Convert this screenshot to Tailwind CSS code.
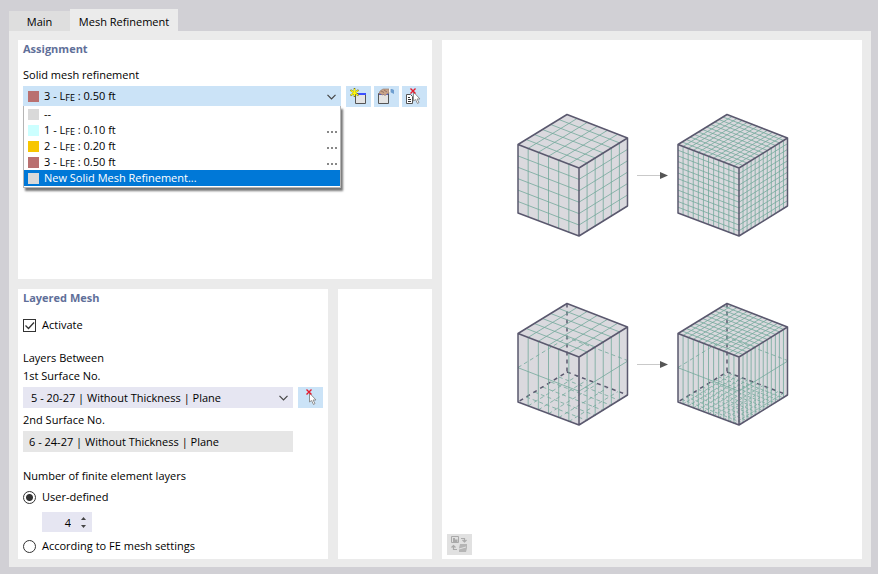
<!DOCTYPE html>
<html lang="en">
<head>
<meta charset="utf-8">
<meta name="viewport" content="width=device-width, initial-scale=1">
<title>Mesh Refinement</title>
<script src="https://cdn.jsdelivr.net/npm/@tailwindcss/browser@4"></script>
</head>
<body class="flex min-h-screen flex-col bg-[#d1d0d5] pt-[9px] pr-[7px] pb-[7px] pl-[9px] font-['Open_Sans','Noto_Sans',sans-serif] text-[11px] leading-4 text-black">
<nav class="flex items-end" role="tablist" aria-label="Dialog pages">
  <button type="button" role="tab" aria-selected="false" class="h-5 w-[61px] bg-[#dedede] pt-[2px]">Main</button>
  <button type="button" role="tab" aria-selected="true" class="h-[22px] w-[108px] bg-[#ebebeb] pt-1">Mesh Refinement</button>
</nav>
<main class="grid flex-1 grid-cols-[414fr_420fr] gap-[10px] bg-[#ebebeb] px-[9px] pt-[9px] pb-2">
  <div class="flex flex-col gap-[10px]">
    <section class="flex-1 bg-white px-[5px]">
      <h2 class="text-[11px] leading-[18px] font-bold text-[#5f6f99]">Assignment</h2>
      <label for="refinement" class="mt-[9px] block">Solid mesh refinement</label>
      <div class="mt-[3px] flex items-start gap-[3px]">
        <div class="relative mr-[2px] flex-1">
          <select id="refinement" class="block h-5 w-full appearance-none bg-[#cbe3f7] text-transparent outline-none">
            <option>3 - LFE : 0.50 ft</option>
          </select>
          <div class="pointer-events-none absolute inset-0 flex items-center gap-[5px] pt-px pr-[5px] pl-[5px]" aria-hidden="true">
            <span class="size-[11px] bg-[#b97070]"></span>
            <span class="flex-1">3 - L<span class="relative top-px text-[9px]">FE</span> : 0.50 ft</span>
            <svg width="9" height="6" viewBox="0 0 9 6" fill="none" stroke="#444" stroke-width="1.2"><path d="M.5.8l4 4 4-4"/></svg>
          </div>
          <ul role="listbox" aria-label="Mesh refinements" class="absolute top-5 right-0 left-0 border-r border-b border-l border-[#b5b5b5] bg-white pb-px shadow-[2px_3px_2px_#777]">
            <li role="option" class="flex h-4 items-center gap-[5px] pl-1"><span class="size-[11px] bg-[#d9d9d9]"></span>--</li>
            <li role="option" class="flex h-4 items-center gap-[5px] pl-1"><span class="size-[11px] bg-[#ccffff]"></span><span>1 - L<span class="relative top-px text-[9px]">FE</span> : 0.10 ft</span><button type="button" aria-label="Edit 1" class="mt-1 mr-[3px] ml-auto flex gap-[2px]"><i class="size-[2px] bg-[#888]"></i><i class="size-[2px] bg-[#888]"></i><i class="size-[2px] bg-[#888]"></i></button></li>
            <li role="option" class="flex h-4 items-center gap-[5px] pl-1"><span class="size-[11px] bg-[#f7c600]"></span><span>2 - L<span class="relative top-px text-[9px]">FE</span> : 0.20 ft</span><button type="button" aria-label="Edit 2" class="mt-1 mr-[3px] ml-auto flex gap-[2px]"><i class="size-[2px] bg-[#888]"></i><i class="size-[2px] bg-[#888]"></i><i class="size-[2px] bg-[#888]"></i></button></li>
            <li role="option" class="flex h-4 items-center gap-[5px] pl-1"><span class="size-[11px] bg-[#b97070]"></span><span>3 - L<span class="relative top-px text-[9px]">FE</span> : 0.50 ft</span><button type="button" aria-label="Edit 3" class="mt-1 mr-[3px] ml-auto flex gap-[2px]"><i class="size-[2px] bg-[#888]"></i><i class="size-[2px] bg-[#888]"></i><i class="size-[2px] bg-[#888]"></i></button></li>
            <li role="option" aria-selected="true" class="flex h-4 items-center gap-[5px] bg-[#0078d7] pl-1 text-white"><span class="size-[11px] bg-[#d9d9d9]"></span>New Solid Mesh Refinement...</li>
          </ul>
        </div>
        <button type="button" aria-label="New refinement" class="h-[21px] w-[25px] bg-[#cbe3f7]">
          <svg width="25" height="21" viewBox="0 0 25 21">
            <path d="M9.500 7.500h10v10h-10z" fill="#e4e4e4" stroke="#555"/>
            <path d="M12 7h8v2h-8z" fill="#3c50ff"/>
            <path d="M8.500 2v9M4.500 4l8 5.500M12.500 4l-8 5.500" stroke="#7c7c18" stroke-width="1.600"/>
            <path d="M8.500 3v7M5 4.500l7 4.500M12 4.500l-7 4.500" stroke="#fff80a" stroke-width="1.200"/>
          </svg>
        </button>
        <button type="button" aria-label="Edit refinement" class="h-[21px] w-[25px] bg-[#cbe3f7]">
          <svg width="25" height="21" viewBox="0 0 25 21">
            <path d="M4.500 7.500h10v10h-10z" fill="#e4e4e4" stroke="#555"/>
            <path d="M5 7h9v2H5z" fill="#4356e8"/>
            <path d="M5 8l1-3 3-2h6v4l-2 1-2 1.500-1.500-1L8 9l-1-1z" fill="#c9a48b" stroke="#907565" stroke-width=".6"/>
            <path d="M7 5l3 1.500M10 4l3 2" stroke="#806253" stroke-width=".7"/>
            <path d="M16 3h2l2 1v4l-2-1-2-1z" fill="#6d9ed0"/><path d="M15 2.500h1.500v4H15z" fill="#f5f5f5"/>
          </svg>
        </button>
        <button type="button" aria-label="Select refinement in view" class="h-[21px] w-[25px] bg-[#cbe3f7]">
          <svg width="25" height="21" viewBox="0 0 25 21">
            <path d="M4.500 8.500h4l2 2v7h-6z" fill="#fff" stroke="#555"/>
            <path d="M6 11.500h2M6 13.500h3M6 15.500h3" stroke="#333"/>
            <path d="M11.500 6v9l2-1.500 2 4 1.500-1-2-3.500h3z" fill="#fff" stroke="#858585" stroke-width=".9"/>
            <path d="M8.500 2.500l5 5M13.500 2.500l-5 5" stroke="#e31b2d" stroke-width="1.400"/>
          </svg>
        </button>
      </div>
    </section>
    <div class="grid grid-cols-[310fr_94fr] gap-[10px]">
      <section class="bg-white px-[5px] pb-[5px]">
        <h2 class="text-[11px] leading-[18px] font-bold text-[#5f6f99]">Layered Mesh</h2>
        <label class="mt-[10px] flex items-center gap-[6px]">
          <span class="relative size-[13px]">
            <input type="checkbox" checked class="block size-[13px] appearance-none border border-[#333] bg-white">
            <svg class="pointer-events-none absolute inset-0" width="13" height="13" viewBox="0 0 13 13" fill="none" stroke="#333" stroke-width="1.300"><path d="M2.500 6.500l3 3 5.500-6"/></svg>
          </span>Activate
        </label>
        <p class="mt-[17px]">Layers Between</p>
        <label for="surface1" class="mt-[2px] block">1st Surface No.</label>
        <div class="mt-[3px] flex items-center gap-[5px]">
          <div class="relative flex-1">
            <select id="surface1" class="block h-[21px] w-full appearance-none bg-[#e6e6f2] pl-2 outline-none">
              <option>5 - 20-27 | Without Thickness | Plane</option>
            </select>
            <svg class="pointer-events-none absolute top-2 right-[5px]" width="9" height="6" viewBox="0 0 9 6" fill="none" stroke="#444" stroke-width="1.200"><path d="M.5.8l4 4 4-4"/></svg>
          </div>
          <button type="button" aria-label="Pick surface in view" class="h-[21px] w-[25px] bg-[#cbe3f7]">
            <svg width="25" height="21" viewBox="0 0 25 21">
              <path d="M11.500 6v9l2-1.500 2 4 1.500-1-2-3.500h3z" fill="#fff" stroke="#858585" stroke-width=".9"/>
              <path d="M8.500 2.500l5 5M13.500 2.500l-5 5" stroke="#e31b2d" stroke-width="1.400"/>
            </svg>
          </button>
        </div>
        <label for="surface2" class="mt-1 block">2nd Surface No.</label>
        <div class="mt-[3px] flex pr-[30px]">
          <input id="surface2" readonly value="6 - 24-27 | Without Thickness | Plane" class="h-[21px] w-full bg-[#e6e6e6] px-[6px] outline-none">
        </div>
        <fieldset>
          <legend class="pt-4">Number of finite element layers</legend>
          <label class="mt-[5px] flex items-center gap-[6px]">
            <input type="radio" name="layers" checked class="size-[13px] appearance-none rounded-full border border-[#333] bg-white bg-[radial-gradient(circle,#333_3px,transparent_4px)]">User-defined
          </label>
          <div class="mt-[7px] ml-[19px] flex h-5 w-[50px] items-center bg-[#e6e6f2]">
            <input type="text" inputmode="numeric" role="spinbutton" aria-label="Layer count" value="4" class="h-5 w-[29px] text-right outline-none">
            <span class="ml-[10px] flex flex-col gap-[5px]">
              <button type="button" aria-label="Increase" class="block h-[3px] w-[5px]"><svg class="block" width="5" height="3" viewBox="0 0 5 3"><path d="M0 3l2.500-3L5 3z" fill="#444"/></svg></button>
              <button type="button" aria-label="Decrease" class="block h-[3px] w-[5px]"><svg class="block" width="5" height="3" viewBox="0 0 5 3"><path d="M0 0l2.500 3L5 0z" fill="#444"/></svg></button>
            </span>
          </div>
          <label class="mt-[6px] flex items-center gap-[6px]">
            <input type="radio" name="layers" class="size-[13px] appearance-none rounded-full border border-[#333] bg-white">According to FE mesh settings
          </label>
        </fieldset>
      </section>
      <section class="bg-white" aria-label="Empty panel"></section>
    </div>
  </div>
  <section class="flex flex-col items-center justify-between bg-white px-[5px] pt-[73px] pb-1" aria-label="Preview">
    <svg class="overflow-visible" width="272" height="316" viewBox="-1 -1 272 316" fill="none" role="img" aria-label="Uniform and layered mesh refinement">
      <defs>
        <path id="coarse" vector-effect="non-scaling-stroke" d="M1 0v6M2 0v6M3 0v6M4 0v6M5 0v6M0 1h6M0 2h6M0 3h6M0 4h6M0 5h6"/>
        <path id="fine" vector-effect="non-scaling-stroke" d="M.5 0v6M1 0v6M1.500 0v6M2 0v6M2.500 0v6M3 0v6M3.500 0v6M4 0v6M4.500 0v6M5 0v6M5.500 0v6M0 .5h6M0 1h6M0 1.500h6M0 2h6M0 2.500h6M0 3h6M0 3.500h6M0 4h6M0 4.500h6M0 5h6M0 5.500h6"/>
        <path id="coarseLayers" vector-effect="non-scaling-stroke" d="M1 0v6M2 0v6M3 0v6M4 0v6M5 0v6M0 3h6"/>
        <path id="fineLayers" vector-effect="non-scaling-stroke" d="M.5 0v6M1 0v6M1.500 0v6M2 0v6M2.500 0v6M3 0v6M3.500 0v6M4 0v6M4.500 0v6M5 0v6M5.500 0v6M0 3h6"/>
        <path id="body" fill="#dad9de" d="M1 30.500L50 .5l60.500 23.500V92L62 122 1 99z"/>
        <g id="edges" stroke="#5a586e" stroke-width="1.500" stroke-linejoin="round">
          <path d="M1 30.500L50 .5l60.500 23.500V92L62 122 1 99zM1 30.500L62 54l48.500-30M62 54v68"/>
        </g>
        <g id="hidden">
          <path d="M50 .5V69L1 99M50 69l60.500 23" stroke="#5a586e" stroke-width="1.500" stroke-dasharray="4 4"/>
          <path d="M1 64.500l49-30 60.500 23" stroke="#72a89b" stroke-width=".8" stroke-dasharray="4 3"/>
        </g>
        <g id="arrow"><path d="M120 61.500h24" stroke="#bbb"/><path d="M143 58l8 3.500-8 3.500z" fill="#555" stroke="none"/></g>
      </defs>
      <g stroke="#72a89b" stroke-width=".8">
        <g>
          <use href="#body" stroke="none"/>
          <use href="#coarse" transform="matrix(10.17 3.92 0 11.4 1 30.5)"/>
          <use href="#coarse" transform="matrix(8.08 -5 0 11.4 62 54)"/>
          <use href="#coarse" transform="matrix(10.17 3.92 8.17 -5 1 30.5)"/>
          <use href="#edges"/>
        </g>
        <g transform="translate(160)">
          <use href="#body" stroke="none"/>
          <use href="#fine" transform="matrix(10.17 3.92 0 11.4 1 30.5)"/>
          <use href="#fine" transform="matrix(8.08 -5 0 11.4 62 54)"/>
          <use href="#fine" transform="matrix(10.17 3.92 8.17 -5 1 30.5)"/>
          <use href="#edges"/>
        </g>
        <use href="#arrow"/>
        <g transform="translate(0 189)">
          <use href="#body" stroke="none"/>
          <use href="#coarse" stroke-dasharray="4 3" transform="matrix(10.17 3.92 8.17 -5 1 99)"/>
          <use href="#hidden"/>
          <use href="#coarseLayers" transform="matrix(10.17 3.92 0 11.4 1 30.5)"/>
          <use href="#coarseLayers" transform="matrix(8.08 -5 0 11.4 62 54)"/>
          <use href="#coarse" transform="matrix(10.17 3.92 8.17 -5 1 30.5)"/>
          <use href="#edges"/>
        </g>
        <g transform="translate(160 189)">
          <use href="#body" stroke="none"/>
          <use href="#fine" stroke-dasharray="3 2" transform="matrix(10.17 3.92 8.17 -5 1 99)"/>
          <use href="#hidden"/>
          <use href="#fineLayers" transform="matrix(10.17 3.92 0 11.4 1 30.5)"/>
          <use href="#fineLayers" transform="matrix(8.08 -5 0 11.4 62 54)"/>
          <use href="#fine" transform="matrix(10.17 3.92 8.17 -5 1 30.5)"/>
          <use href="#edges"/>
        </g>
        <use href="#arrow" transform="translate(0 189)"/>
      </g>
    </svg>
    <button type="button" disabled aria-label="Switch picture" class="h-[21px] w-[25px] self-start bg-[#e1e1e1]">
      <svg width="25" height="21" viewBox="0 0 25 21" fill="none" stroke="#aaa">
        <path d="M4.500 2.500h7v6h-7z"/><path d="M6 4h2v1.500h2.500V8H6z" fill="#aaa" stroke="none"/>
        <path d="M13 10h7v4l-1 4h-7v-4z" fill="#b5b5b5" stroke="none"/><path d="M12 15l7-2" stroke="#e1e1e1"/>
        <path d="M14 4.500h3.500v3M15.500 6l2 2 2-2M10 15.500H6.500V12M4.500 13.500l2-2 2 2" stroke-width="1.200"/>
      </svg>
    </button>
  </section>
</main>
</body>
</html>
